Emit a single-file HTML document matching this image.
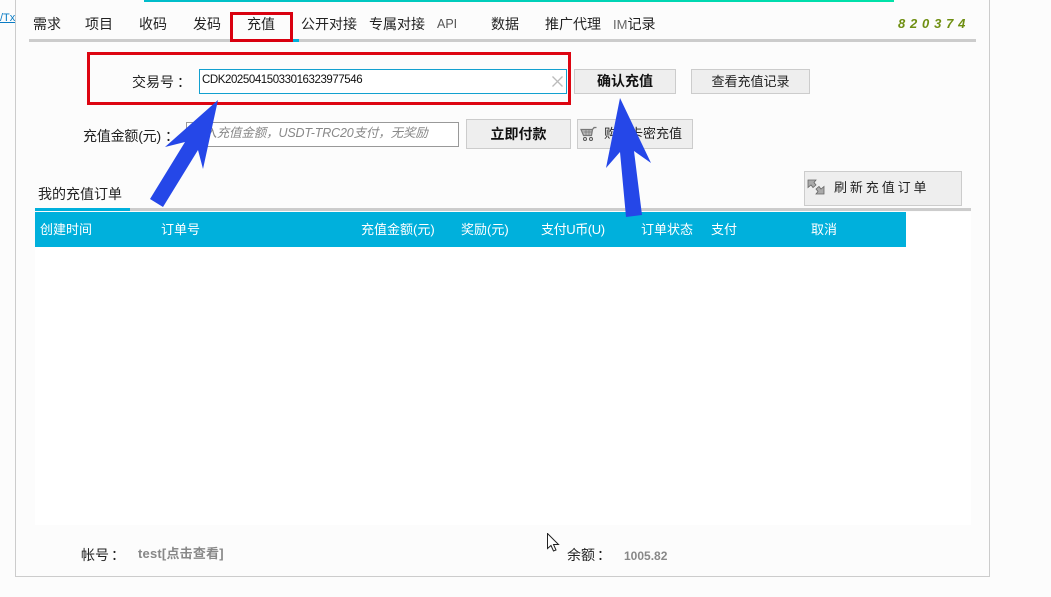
<!DOCTYPE html>
<html lang="zh">
<head>
<meta charset="utf-8">
<title>充值</title>
<style>
html,body{margin:0;padding:0;width:1051px;height:597px;overflow:hidden;background:#fcfcfc;}
body{position:relative;font-family:"Liberation Sans","Noto Sans CJK SC",sans-serif;font-size:14px;color:#222;}
.a{position:absolute;white-space:nowrap;}
.t{position:absolute;white-space:nowrap;line-height:18px;height:18px;}
.btn{position:absolute;box-sizing:border-box;background:#eee;border:1px solid #ccc;text-align:center;color:#222;white-space:nowrap;}
.th{position:absolute;top:221px;color:#fff;line-height:18px;white-space:nowrap;font-size:13px;}
</style>
</head>
<body>
<div class="a" style="left:15px;top:-2px;width:973px;height:577px;border:1px solid #ccc;background:#fcfcfc;"></div>
<div class="a" style="left:0;top:10px;width:15px;height:16px;overflow:hidden;color:#0a7cc4;font-size:11px;line-height:16px;text-decoration:underline;">/Tx</div>
<div class="a" style="left:144px;top:0;width:750px;height:2px;background:linear-gradient(90deg,#00bccb,#00e2a8);"></div>

<div class="t" style="left:33px;top:15px;">需求</div>
<div class="t" style="left:85px;top:15px;">项目</div>
<div class="t" style="left:139px;top:15px;">收码</div>
<div class="t" style="left:193px;top:15px;">发码</div>
<div class="t" style="left:247px;top:15px;">充值</div>
<div class="t" style="left:301px;top:15px;">公开对接</div>
<div class="t" style="left:369px;top:15px;">专属对接</div>
<div class="t" style="left:437px;top:15px;color:#555;font-size:12.5px;">API</div>
<div class="t" style="left:491px;top:15px;">数据</div>
<div class="t" style="left:545px;top:15px;">推广代理</div>
<div class="t" style="left:613px;top:15px;"><span style="color:#666;font-size:13px;">IM</span>记录</div>
<div class="t" style="left:898px;top:15px;color:#6f8f12;font-size:13px;font-weight:bold;font-style:italic;letter-spacing:4.8px;">820374</div>

<div class="a" style="left:29px;top:39px;width:947px;height:3px;background:#ccc;"></div>
<div class="a" style="left:230px;top:39px;width:69px;height:3px;background:#00b0dc;"></div>
<div class="a" style="left:230px;top:12px;width:63px;height:30px;box-sizing:border-box;border:3px solid #d9000f;"></div>

<div class="a" style="left:87px;top:52px;width:484px;height:53px;box-sizing:border-box;border:3px solid #dd0511;"></div>
<div class="t" style="left:132px;top:73px;">交易号<span style="margin-left:3px;">：</span></div>
<div class="a" style="left:199px;top:69px;width:368px;height:25px;box-sizing:border-box;border:1px solid #12a0cf;background:#fff;"></div>
<div class="t" style="left:202px;top:71px;font-size:11.5px;letter-spacing:-0.43px;color:#111;">CDK20250415033016323977546</div>
<svg class="a" style="left:551px;top:75px;" width="13" height="13" viewBox="0 0 13 13"><path d="M1.5 1.5L11.5 11.5M11.5 1.5L1.5 11.5" stroke="#bbb" stroke-width="1.3" fill="none"/></svg>
<div class="btn" style="left:574px;top:69px;width:102px;height:25px;line-height:23px;font-weight:bold;color:#111;">确认充值</div>
<div class="btn" style="left:691px;top:69px;width:119px;height:25px;line-height:23px;font-size:13px;">查看充值记录</div>

<div class="t" style="left:83px;top:127px;letter-spacing:-0.2px;">充值金额(元)<span style="margin-left:4px;">：</span></div>
<div class="a" style="left:186px;top:122px;width:273px;height:25px;box-sizing:border-box;border:1px solid #999;background:#fff;"></div>
<div class="t" style="left:192px;top:124px;font-style:italic;color:#888;font-size:12.5px;letter-spacing:-0.15px;">输入充值金额，USDT-TRC20支付，无奖励</div>
<div class="btn" style="left:466px;top:119px;width:105px;height:30px;line-height:28px;font-weight:bold;color:#111;">立即付款</div>
<div class="btn" style="left:577px;top:119px;width:116px;height:30px;line-height:28px;text-align:left;padding-left:26px;font-size:13px;">购买卡密充值</div>
<svg class="a" style="left:580px;top:126px;" width="18" height="16" viewBox="0 0 18 16"><path d="M1 3.5H12.5L11.5 9.5H3.5ZM12.5 3.5L14 1.5H16.5" stroke="#777" stroke-width="1.2" fill="#bbb"/><path d="M3.5 6H12M6 3.5V9.5M9 3.5V9.5" stroke="#777" stroke-width="0.7" fill="none"/><circle cx="5" cy="13" r="1.5" fill="none" stroke="#555"/><circle cx="11" cy="13" r="1.5" fill="none" stroke="#555"/></svg>

<div class="t" style="left:38px;top:185px;">我的充值订单</div>
<div class="a" style="left:35px;top:208px;width:936px;height:3px;background:#ccc;"></div>
<div class="a" style="left:35px;top:208px;width:95px;height:3px;background:#00b0dc;"></div>
<div class="btn" style="left:804px;top:171px;width:158px;height:35px;"></div>
<div class="t" style="left:834px;top:179px;letter-spacing:2.9px;font-size:13px;">刷新充值订单</div>
<svg class="a" style="left:807px;top:179px;" width="18" height="16" viewBox="0 0 18 16"><path d="M1 1H9L7 3.500 9 6 6 8.500 4 6 1 8.500Z" fill="#aaa" stroke="#666" stroke-width="0.8"/><path d="M17 15H9L11 12.500 9 10 12 7.500 14 10 17 7.500Z" fill="#aaa" stroke="#666" stroke-width="0.8"/></svg>

<div class="a" style="left:35px;top:212px;width:936px;height:313px;background:#fff;"></div>
<div class="a" style="left:35px;top:212px;width:871px;height:35px;background:#00b0dc;"></div>
<div class="th" style="left:40px;">创建时间</div>
<div class="th" style="left:161px;">订单号</div>
<div class="th" style="left:361px;">充值金额(元)</div>
<div class="th" style="left:461px;">奖励(元)</div>
<div class="th" style="left:541px;letter-spacing:-0.4px;">支付U币(U)</div>
<div class="th" style="left:641px;">订单状态</div>
<div class="th" style="left:711px;">支付</div>
<div class="th" style="left:811px;">取消</div>

<div class="t" style="left:81px;top:546px;">帐号<span style="margin-left:2px;">：</span></div>
<div class="t" style="left:138px;top:545px;font-weight:bold;color:#888;font-size:13px;letter-spacing:0.2px;">test[点击查看]</div>
<div class="t" style="left:567px;top:546px;">余额<span style="margin-left:2px;">：</span></div>
<div class="t" style="left:624px;top:547px;font-weight:bold;color:#888;font-size:12px;">1005.82</div>

<svg class="a" style="left:150px;top:97px;" width="75" height="112" viewBox="150 97 75 112"><path d="M218 100L203 169 198 150 163 207 150 199 185 142 165 147Z" fill="#2547e8"/></svg>
<svg class="a" style="left:600px;top:97px;" width="60" height="124" viewBox="600 97 60 124"><path d="M620 98L651 163 634 151 642 215 626 217 620 152 606 168Z" fill="#2547e8"/></svg>
<svg class="a" style="left:547px;top:533px;" width="13" height="20" viewBox="0 0 13 20"><path d="M0.500 0.500V15.500L4 12.500 6.500 18 9 17 6.500 11.500H11.500Z" fill="#fff" stroke="#222" stroke-width="1"/></svg>
</body>
</html>
